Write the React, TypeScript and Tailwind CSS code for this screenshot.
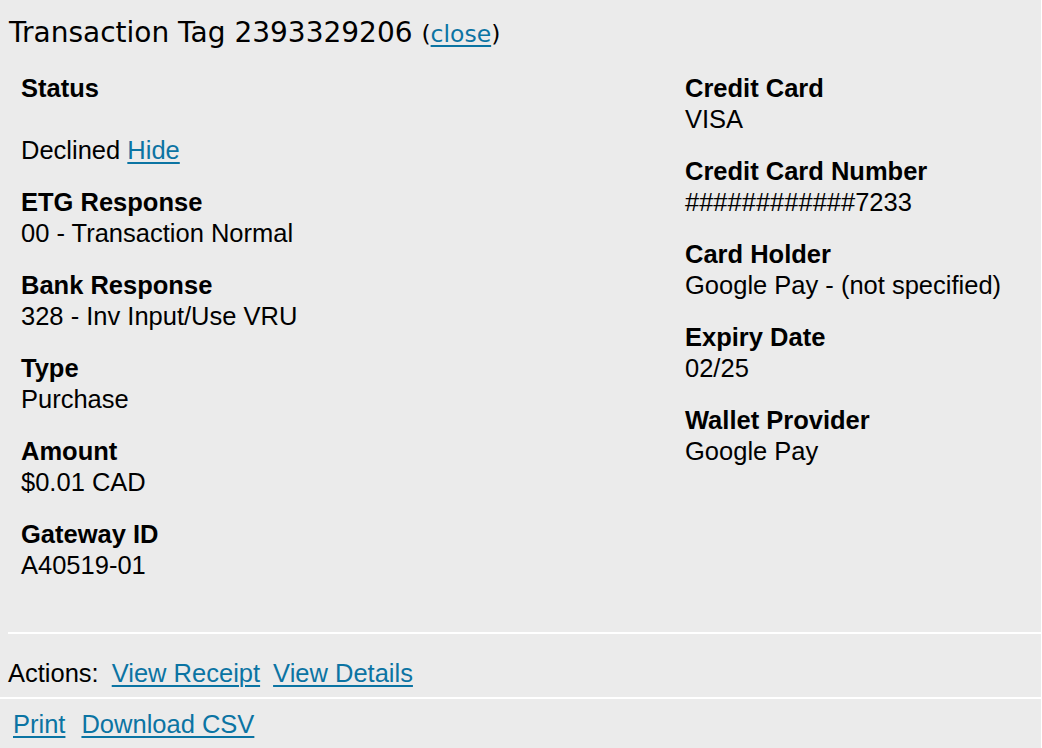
import React from "react"

const linkCls = "text-[#0b74a3] underline underline-offset-[3px] decoration-[1.5px]"

type Field = { label: string; value: React.ReactNode }

const leftFields: Field[] = [
  {
    label: "Status",
    value: (
      <>
        <br />
        Declined{" "}
        <a href="#" className={linkCls}>
          Hide
        </a>
      </>
    ),
  },
  { label: "ETG Response", value: "00 - Transaction Normal" },
  { label: "Bank Response", value: "328 - Inv Input/Use VRU" },
  { label: "Type", value: "Purchase" },
  { label: "Amount", value: "$0.01 CAD" },
  { label: "Gateway ID", value: "A40519-01" },
]

const rightFields: Field[] = [
  { label: "Credit Card", value: "VISA" },
  { label: "Credit Card Number", value: "############7233" },
  { label: "Card Holder", value: "Google Pay - (not specified)" },
  { label: "Expiry Date", value: "02/25" },
  { label: "Wallet Provider", value: "Google Pay" },
]

const FieldList = ({ fields }: { fields: Field[] }) => (
  <div className="flex flex-col gap-[21px]">
    {fields.map((f) => (
      <div key={f.label}>
        <div className="font-bold">{f.label}</div>
        <div>{f.value}</div>
      </div>
    ))}
  </div>
)

export default function App() {
  return (
    <div className="min-h-screen bg-white text-black font-['Liberation_Sans',Arial,sans-serif] text-[25.5px] leading-[31px]">
      <div className="w-[1041px] bg-[#ebebeb]">
        {/* Header */}
        <h2 className="pl-[9px] pt-[14px] h-[72px] font-['DejaVu_Sans',sans-serif] text-[28px] leading-[38px] font-normal">
          Transaction Tag 2393329206{" "}
          <span className="text-[23.5px]">
            (
            <a href="#" className={linkCls}>
              close
            </a>
            )
          </span>
        </h2>

        {/* Details */}
        <div className="grid grid-cols-[664px_1fr] pl-[21px] pt-[1px] pb-[51px]">
          <FieldList fields={leftFields} />
          <FieldList fields={rightFields} />
        </div>

        {/* Actions */}
        <div className="ml-2 border-t-2 border-white pt-[24px] pb-[8px] flex gap-[13px]">
          <span>Actions:</span>
          <a href="#" className={linkCls}>
            View Receipt
          </a>
          <a href="#" className={linkCls}>
            View Details
          </a>
        </div>

        {/* Export */}
        <div className="border-t-2 border-white pl-[13px] pt-[10px] pb-[9px] flex gap-[16px]">
          <a href="#" className={linkCls}>
            Print
          </a>
          <a href="#" className={linkCls}>
            Download CSV
          </a>
        </div>
      </div>
    </div>
  )
}
